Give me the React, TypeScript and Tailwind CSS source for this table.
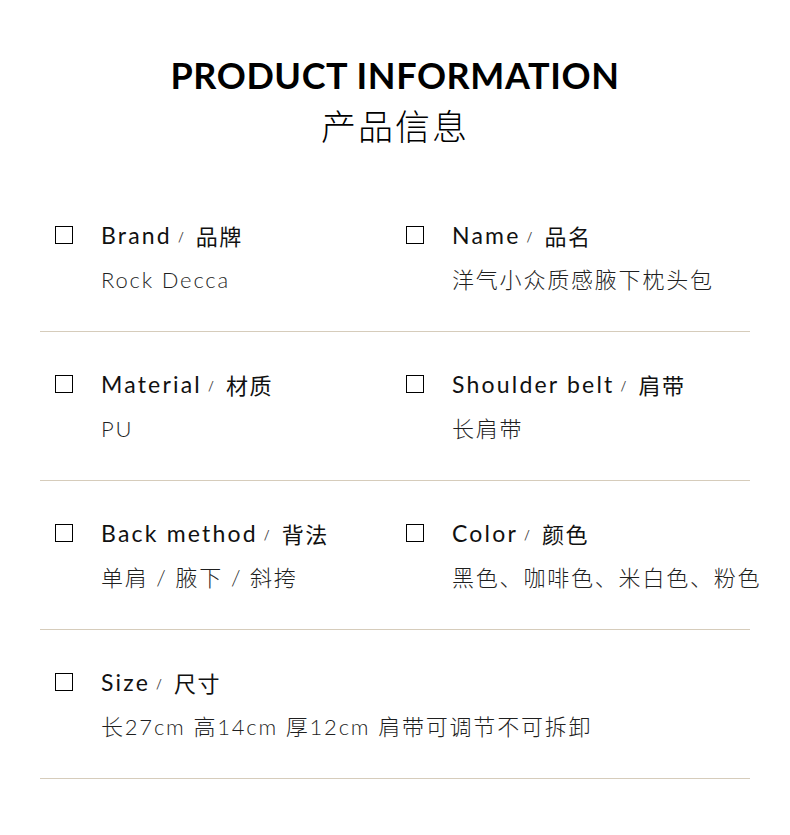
import React from 'react'

const en = { fontFamily: 'Lato, "Noto Sans CJK SC", sans-serif' }
const cn = { fontFamily: '"Noto Sans CJK SC", "Noto Sans", sans-serif' }

type Item = { en: string; cn: string; value: string }

const rows: Item[][] = [
  [
    { en: 'Brand', cn: '品牌', value: 'Rock Decca' },
    { en: 'Name', cn: '品名', value: '洋气小众质感腋下枕头包' },
  ],
  [
    { en: 'Material', cn: '材质', value: 'PU' },
    { en: 'Shoulder belt', cn: '肩带', value: '长肩带' },
  ],
  [
    { en: 'Back method', cn: '背法', value: '单肩 / 腋下 / 斜挎' },
    { en: 'Color', cn: '颜色', value: '黑色、咖啡色、米白色、粉色' },
  ],
  [{ en: 'Size', cn: '尺寸', value: '长27cm 高14cm 厚12cm 肩带可调节不可拆卸' }],
]

function Cell({ item }: { item: Item }) {
  return (
    <div className="flex items-start pl-[15px]">
      <div className="mt-[6px] h-[18px] w-[18px] shrink-0 border-[1.5px] border-black" />
      <div className="ml-[28px] flex flex-col gap-[14px] whitespace-nowrap">
        <div className="flex h-[30px] items-center text-[#111]">
          <span style={en} className="text-[23px] tracking-[2.2px]">{item.en}</span>
          <span style={en} className="ml-[6px] mr-[12px] mt-[5px] text-[13px] text-[#444]">/</span>
          <span style={cn} className="text-[22px] font-normal tracking-[1.5px]">{item.cn}</span>
        </div>
        <div style={en} className="flex h-[30px] items-center text-[22px] font-light tracking-[1.8px] text-[#1f1f1f]">
          {item.value}
        </div>
      </div>
    </div>
  )
}

export default function App() {
  return (
    <div className="min-h-[835px] w-[790px] bg-white">
      <div className="flex flex-col items-center pt-[53px] pb-[36px]">
        <div style={en} className="h-[44px] text-[36px] leading-[44px] font-bold tracking-[0.6px] text-black">
          PRODUCT INFORMATION
        </div>
        <div style={cn} className="mt-[6px] h-[44px] text-[35px] leading-[44px] font-light tracking-[2px] text-black">
          产品信息
        </div>
      </div>
      <div className="px-[40px]">
        {rows.map((row, i) => (
          <div key={i} className="grid grid-cols-[351px_1fr] border-b border-[#d6ccbb] pt-[37px] pb-[37px]">
            {row.map((item) => (
              <Cell key={item.en} item={item} />
            ))}
          </div>
        ))}
      </div>
    </div>
  )
}
